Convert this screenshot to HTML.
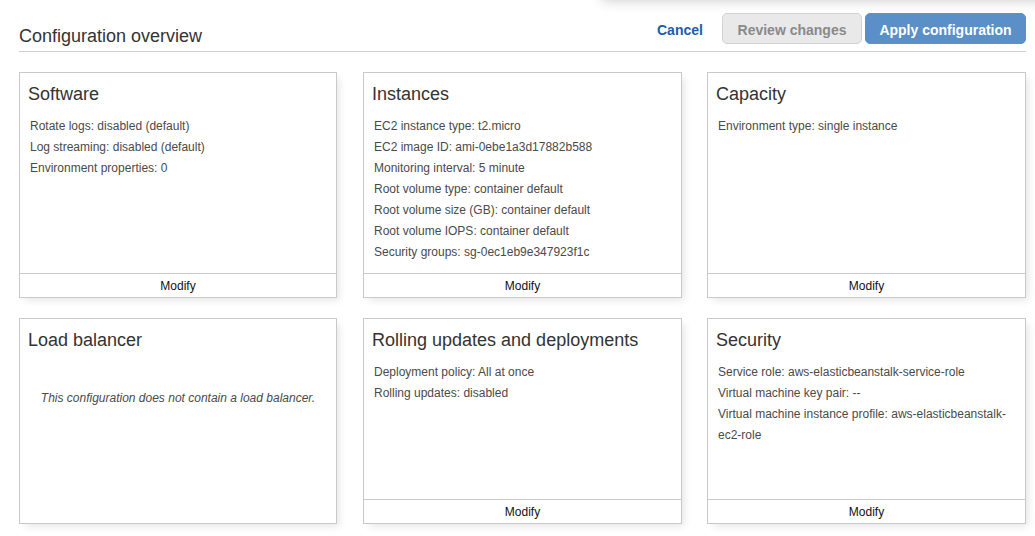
<!DOCTYPE html>
<html><head><meta charset="utf-8">
<style>
html,body{margin:0;padding:0;background:#fff;width:1035px;height:536px;overflow:hidden;position:relative;font-family:"Liberation Sans",sans-serif;}
.topshadow{position:absolute;left:602px;top:-40px;width:600px;height:40px;background:#fff;box-shadow:0 0 12px rgba(0,0,0,0.22);}
.title{position:absolute;left:19px;top:26px;font-size:18px;line-height:20px;color:#333;white-space:nowrap;}
.hr{position:absolute;left:19px;top:51px;width:1007px;height:1px;background:#d0d0d0;}
.cancel{position:absolute;left:657px;top:21px;font-size:14px;line-height:18px;font-weight:bold;color:#1a5cb4;}
.btn{position:absolute;top:13px;height:31px;box-sizing:border-box;border-radius:5px;font-size:14px;font-weight:bold;line-height:29px;padding-top:2px;text-align:center;white-space:nowrap;}
.review{left:722px;width:140px;background:#e9e9e9;border:1px solid #d2d2d2;color:#8a8a8a;}
.apply{left:865px;width:161px;background:#5a8fc8;border:1px solid #5a8fc8;color:#fff;}
.card{position:absolute;box-sizing:border-box;border:1px solid #c9c9c9;background:#fff;box-shadow:4px 4px 8px -2px rgba(0,0,0,0.11);}
.card h3{margin:0;position:absolute;left:8px;top:11px;font-size:18px;line-height:20px;font-weight:normal;color:#333;white-space:nowrap;}
.card .body{position:absolute;left:10px;top:43px;font-size:12px;line-height:21px;color:#4a4a4a;}
.card .foot{position:absolute;left:0;right:0;bottom:0;height:22px;padding-top:1px;border-top:1px solid #c9c9c9;font-size:12px;line-height:23px;text-align:center;color:#111;}
.r1{top:72px;height:226px;}
.r2{top:318px;height:206px;}
.c1{left:19px;width:318px;}
.c2{left:363px;width:319px;}
.c3{left:707px;width:319px;}
.empty{position:absolute;left:0;right:0;top:71px;text-align:center;font-style:italic;font-size:12px;line-height:16px;color:#4a4a4a;}
</style></head><body>
<div class="topshadow"></div>
<div class="title">Configuration overview</div>
<div class="cancel">Cancel</div>
<div class="btn review">Review changes</div>
<div class="btn apply">Apply configuration</div>
<div class="hr"></div>

<div class="card r1 c1"><h3>Software</h3>
<div class="body">Rotate logs: disabled (default)<br>Log streaming: disabled (default)<br>Environment properties: 0</div>
<div class="foot">Modify</div></div>

<div class="card r1 c2"><h3>Instances</h3>
<div class="body">EC2 instance type: t2.micro<br>EC2 image ID: ami-0ebe1a3d17882b588<br>Monitoring interval: 5 minute<br>Root volume type: container default<br>Root volume size (GB): container default<br>Root volume IOPS: container default<br>Security groups: sg-0ec1eb9e347923f1c</div>
<div class="foot">Modify</div></div>

<div class="card r1 c3"><h3>Capacity</h3>
<div class="body">Environment type: single instance</div>
<div class="foot">Modify</div></div>

<div class="card r2 c1"><h3>Load balancer</h3>
<div class="empty">This configuration does not contain a load balancer.</div></div>

<div class="card r2 c2"><h3>Rolling updates and deployments</h3>
<div class="body">Deployment policy: All at once<br>Rolling updates: disabled</div>
<div class="foot">Modify</div></div>

<div class="card r2 c3"><h3>Security</h3>
<div class="body">Service role: aws-elasticbeanstalk-service-role<br>Virtual machine key pair: --<br>Virtual machine instance profile: aws-elasticbeanstalk-<br>ec2-role</div>
<div class="foot">Modify</div></div>
</body></html>
